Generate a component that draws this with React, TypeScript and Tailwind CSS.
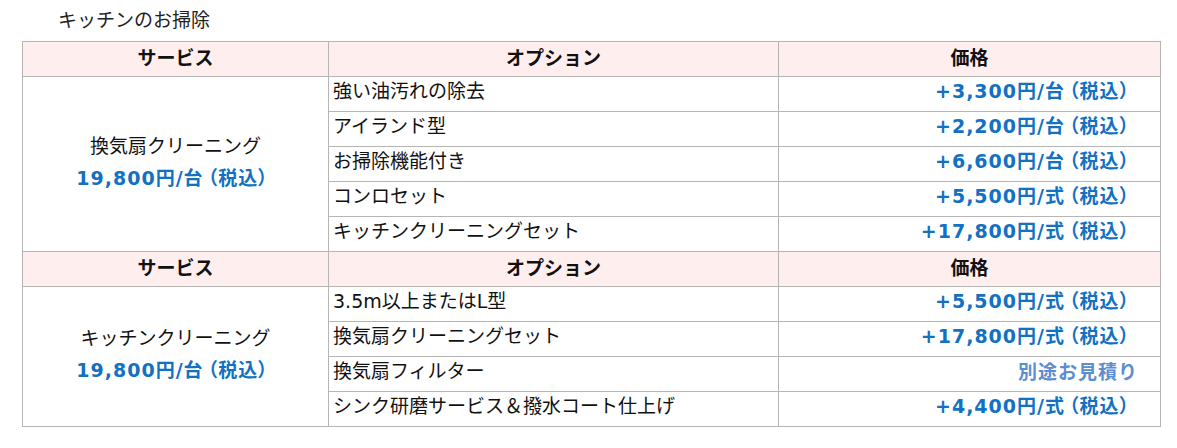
import React from "react";

type Row = { opt: string; price: string; unit?: string; muted?: boolean };
type Section = { name: string; price: string; rows: Row[] };

const sections: Section[] = [
  {
    name: "換気扇クリーニング",
    price: "19,800円/台",
    rows: [
      { opt: "強い油汚れの除去", price: "+3,300円/台" },
      { opt: "アイランド型", price: "+2,200円/台" },
      { opt: "お掃除機能付き", price: "+6,600円/台" },
      { opt: "コンロセット", price: "+5,500円/式" },
      { opt: "キッチンクリーニングセット", price: "+17,800円/式" },
    ],
  },
  {
    name: "キッチンクリーニング",
    price: "19,800円/台",
    rows: [
      { opt: "3.5m以上またはL型", price: "+5,500円/式" },
      { opt: "換気扇クリーニングセット", price: "+17,800円/式" },
      { opt: "換気扇フィルター", price: "別途お見積り", muted: true },
      { opt: "シンク研磨サービス＆撥水コート仕上げ", price: "+4,400円/式" },
    ],
  },
];

const jp = '"Noto Sans CJK JP", "Noto Sans", sans-serif';
const mixed = '"DejaVu Sans", "Noto Sans CJK JP", sans-serif';

function Price({ value }: { value: string }) {
  return (
    <>
      {value}
      <span className="ml-[4px]">（税込）</span>
    </>
  );
}

export default function App() {
  return (
    <div className="bg-white w-[1177px] h-[448px] text-[#111]" style={{ fontFamily: jp }}>
      <div className="pl-[58px] pt-[5px] h-[41px] text-[19px] leading-[28px] text-[#222]">
        キッチンのお掃除
      </div>
      <table className="ml-[22px] border-collapse w-[1138px] table-fixed text-[19px] leading-[24px]">
        <colgroup>
          <col className="w-[306px]" />
          <col className="w-[450px]" />
          <col className="w-[382px]" />
        </colgroup>
        <tbody>
          {sections.map((s, si) => (
            <React.Fragment key={si}>
              <tr className="bg-[#ffeeee] h-[35px]">
                <th className="border border-[#b5b5b5] font-bold text-center pt-0 pb-[5px] px-0">サービス</th>
                <th className="border border-[#b5b5b5] font-bold text-center pt-0 pb-[5px] px-0">オプション</th>
                <th className="border border-[#b5b5b5] font-bold text-center pt-0 pb-[5px] px-0">価格</th>
              </tr>
              {s.rows.map((r, ri) => (
                <tr key={ri} className="h-[35px]">
                  {ri === 0 && (
                    <td
                      rowSpan={s.rows.length}
                      className="border border-[#b5b5b5] text-center align-middle pt-0 pb-[6px] px-0"
                    >
                      <div className="flex flex-col items-center gap-[9px]">
                        <span>{s.name}</span>
                        <span
                          className="font-bold text-[#1271c2] tracking-[1px] pr-[6px] [font-feature-settings:'palt']"
                          style={{ fontFamily: mixed }}
                        >
                          <Price value={s.price} />
                        </span>
                      </div>
                    </td>
                  )}
                  <td className="border border-[#b5b5b5] pl-[4px] pt-0 pb-[6px]" style={{ fontFamily: mixed }}>
                    {r.opt}
                  </td>
                  {r.muted ? (
                    <td className="border border-[#b5b5b5] text-right pr-[22px] pt-0 pb-[6px] font-bold text-[#5b8ed0] tracking-[1px]">
                      {r.price}
                    </td>
                  ) : (
                    <td
                      className="border border-[#b5b5b5] text-right pr-[30px] pt-0 pb-[6px] font-bold text-[#1271c2] tracking-[1px] [font-feature-settings:'palt']"
                      style={{ fontFamily: mixed }}
                    >
                      <Price value={r.price} />
                    </td>
                  )}
                </tr>
              ))}
            </React.Fragment>
          ))}
        </tbody>
      </table>
    </div>
  );
}
